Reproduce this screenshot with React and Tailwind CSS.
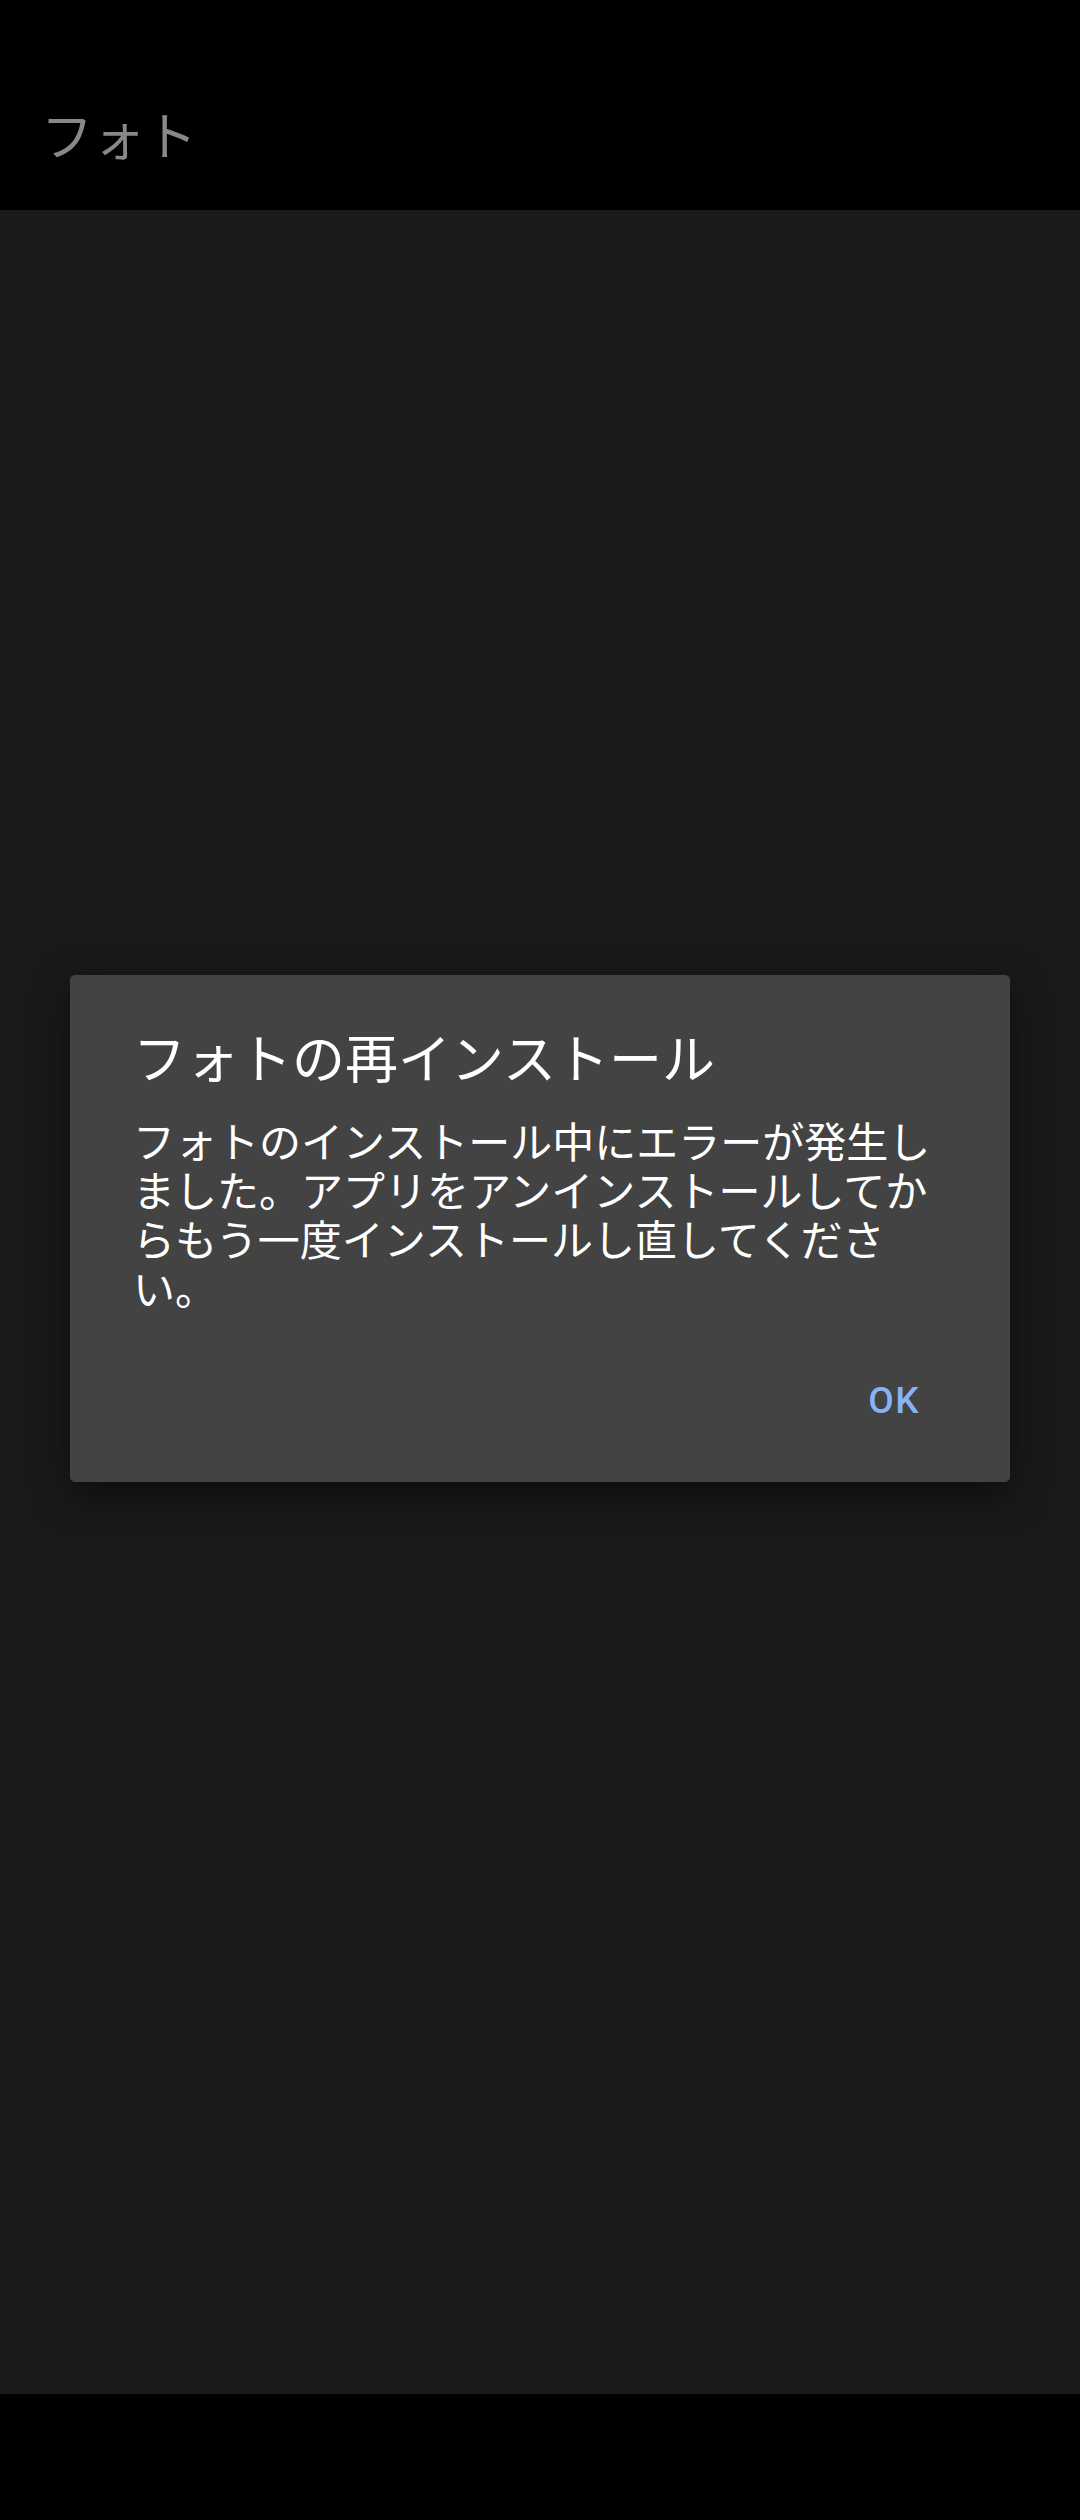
import React from "react";

const jp = { fontFamily: '"Noto Sans CJK JP", "Noto Sans", sans-serif' };

function App() {
  return (
    <div className="w-[1080px] h-[2520px] flex flex-col bg-black" style={jp}>

      {/* Status bar + toolbar */}
      <div className="bg-black pt-[63px]">
        <div className="h-[147px] flex items-center pl-[41px] pb-[6px]">
          <h1 className="text-[52px] leading-[60px] text-[#888888]">フォト</h1>
        </div>
      </div>

      {/* Content */}
      <div className="flex-1 bg-[#1a1a1a] pt-[765px] px-[70px]">

        {/* Dialog */}
        <div className="bg-[#434343] rounded-[5px] shadow-[0_12px_40px_rgba(0,0,0,0.55)] pt-[51px] pb-[57px] pl-[63px] pr-[69px]">
          <h2 className="text-[53px] leading-[60px] text-white">フォトの再インストール</h2>
          <p className="mt-[29px] text-[42px] leading-[49px] text-white">
            フォトのインストール中にエラーが発生しました。アプリをアンインストールしてからもう一度インストールし直してください。
          </p>
          <div className="mt-[66px] flex justify-end pr-[21px]">
            <button
              className="text-[37px] leading-[48px] font-medium tracking-[0.04em] text-[#86b3f7]"
              style={{ fontFamily: 'Roboto, "Liberation Sans", sans-serif' }}
            >
              OK
            </button>
          </div>
        </div>

      </div>

      {/* Navigation bar */}
      <div className="h-[126px] bg-black"></div>

    </div>
  );
}

export default App;
